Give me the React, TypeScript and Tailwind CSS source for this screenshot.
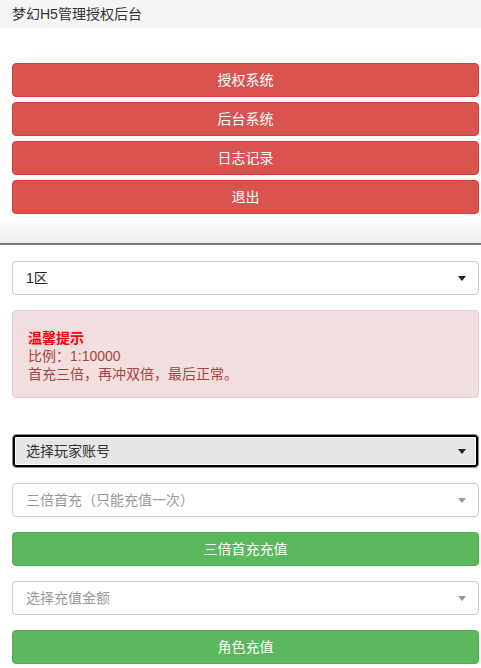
import React from "react";

const font = { fontFamily: '"Liberation Sans", "Noto Sans CJK SC", sans-serif' };

function Caret({ muted = false }: { muted?: boolean }) {
  return (
    <span
      className={`w-0 h-0 border-l-[4px] border-r-[4px] border-t-[5px] border-l-transparent border-r-transparent ${
        muted ? "border-t-[#999]" : "border-t-[#222]"
      }`}
    />
  );
}

function SelectBox({
  label,
  muted = false,
  focused = false,
}: {
  label: string;
  muted?: boolean;
  focused?: boolean;
}) {
  return (
    <div
      className={`h-[34px] flex items-center justify-between pl-[13px] pr-[12px] rounded-[4px] border text-[14px] ${
        focused
          ? "bg-[#e6e6e6] border-[#888] shadow-[inset_0_0_0_2px_#000,inset_0_0_0_3px_#fff] text-[#333]"
          : muted
          ? "bg-white border-[#ccc] text-[#999]"
          : "bg-white border-[#ccc] text-[#222]"
      }`}
    >
      <span>{label}</span>
      <Caret muted={muted} />
    </div>
  );
}

function RedButton({ label }: { label: string }) {
  return (
    <button className="h-[34px] w-full rounded-[4px] border border-[#d43f3a] bg-[#d9534f] text-white text-[14px]">
      {label}
    </button>
  );
}

function GreenButton({ label }: { label: string }) {
  return (
    <button className="h-[34px] w-full rounded-[4px] border border-[#4cae4c] bg-[#5cb85c] text-white text-[14px]">
      {label}
    </button>
  );
}

export default function App() {
  return (
    <div className="w-[481px] min-h-[668px] bg-white" style={font}>
      <div className="h-[28px] bg-[#f5f5f5] flex items-center pl-[12px] text-[14px] text-[#333]">
        梦幻H5管理授权后台
      </div>

      <div className="pl-[12px] pr-[2px] pt-[35px] flex flex-col gap-[5px]">
        <RedButton label="授权系统" />
        <RedButton label="后台系统" />
        <RedButton label="日志记录" />
        <RedButton label="退出" />
      </div>

      <div className="mt-[2px] h-[29px] bg-gradient-to-b from-white to-[#eeeeee] border-b-2 border-[#777]" />

      <div className="pl-[12px] pr-[2px] pt-[16px] pb-[4px]">
        <SelectBox label="1区" />

        <div className="mt-[15px] rounded-[4px] border border-[#ebccd1] bg-[#f2dede] px-[15px] pt-[18px] pb-[14px] text-[14px] leading-[18px] text-[#a94442]">
          <div className="font-bold text-[#ff0000]">温馨提示</div>
          <div>比例：1:10000</div>
          <div>首充三倍，再冲双倍，最后正常。</div>
        </div>

        <div className="mt-[36px] flex flex-col gap-[15px]">
          <SelectBox label="选择玩家账号" focused />
          <SelectBox label="三倍首充（只能充值一次）" muted />
          <GreenButton label="三倍首充充值" />
          <SelectBox label="选择充值金额" muted />
          <GreenButton label="角色充值" />
        </div>
      </div>
    </div>
  );
}
